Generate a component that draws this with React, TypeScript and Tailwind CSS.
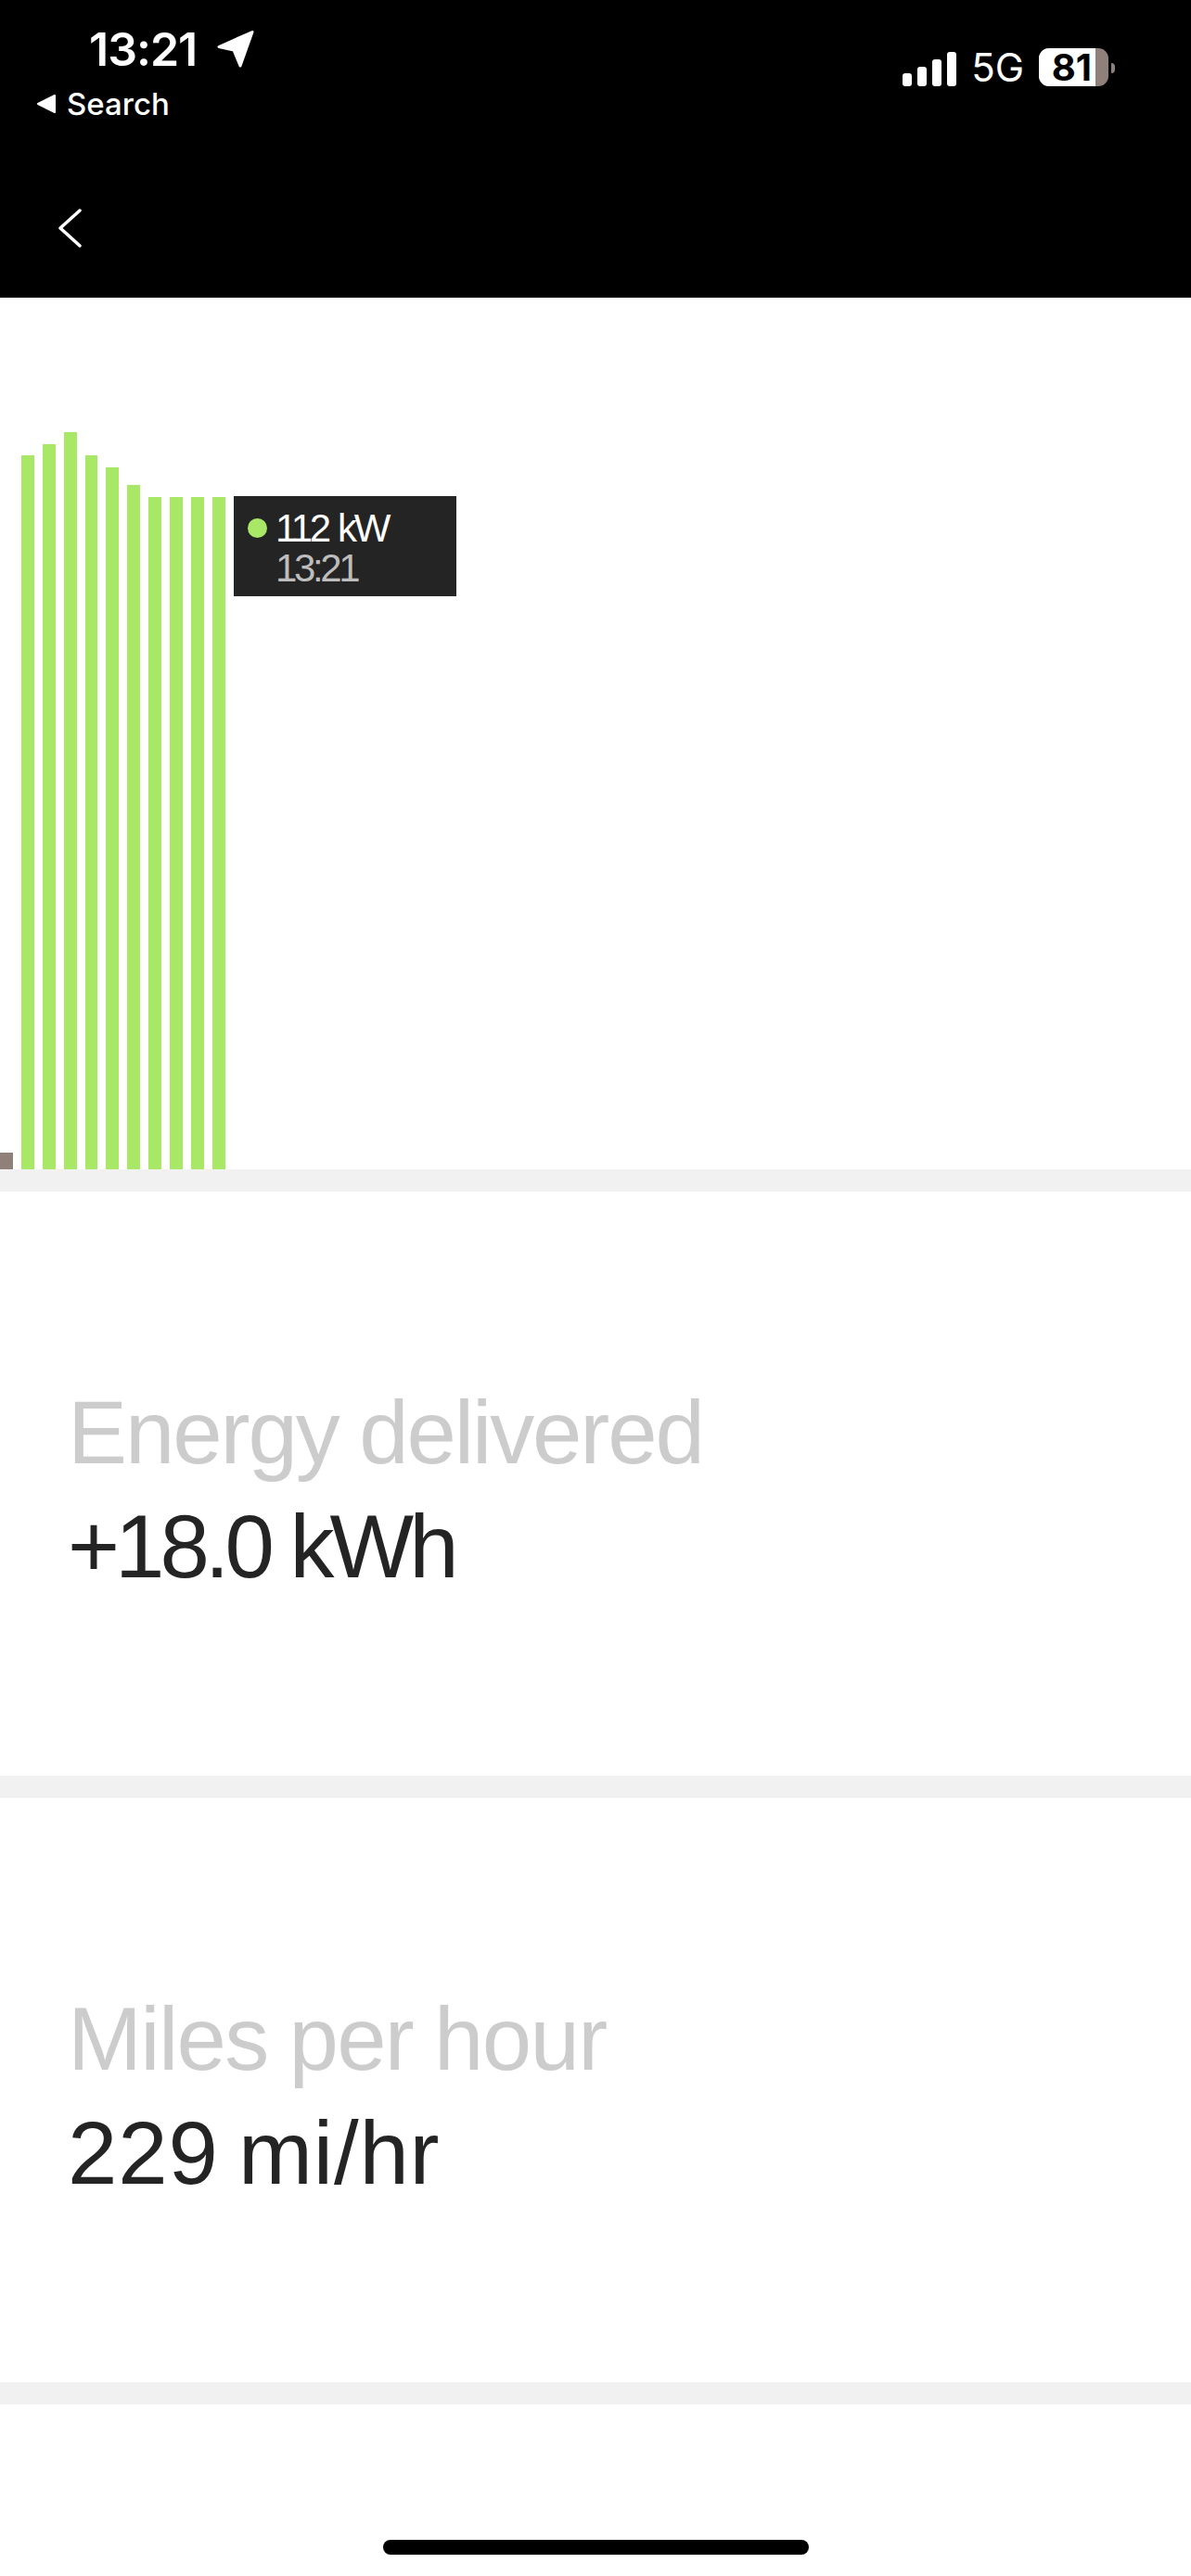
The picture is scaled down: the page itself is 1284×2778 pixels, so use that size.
const bars = [
  { height: 18, width: 'w-[14px]', color: 'bg-[#8f817a]' },
  { height: 770, width: 'w-[14px]', color: 'bg-[#a9e866]' },
  { height: 782, width: 'w-[14px]', color: 'bg-[#a9e866]' },
  { height: 795, width: 'w-[14px]', color: 'bg-[#a9e866]' },
  { height: 770, width: 'w-[13px]', color: 'bg-[#a9e866]' },
  { height: 757, width: 'w-[14px]', color: 'bg-[#a9e866]' },
  { height: 738, width: 'w-[14px]', color: 'bg-[#a9e866]' },
  { height: 725, width: 'w-[14px]', color: 'bg-[#a9e866]' },
  { height: 725, width: 'w-[14px]', color: 'bg-[#a9e866]' },
  { height: 725, width: 'w-[14px]', color: 'bg-[#a9e866]' },
  { height: 725, width: 'w-[14px]', color: 'bg-[#a9e866]' },
];

function StatusBar() {
  return (
    <div className="flex justify-between pl-[39px] pr-[82px] pt-[33px]">
      <div>
        <div className="flex items-center pl-[57px]">
          <span className="font-['Inter',sans-serif] text-[50px] leading-[40px] font-semibold tracking-[-1px]">13:21</span>
          <svg className="ml-[22px]" width="40" height="40" viewBox="0 0 40 40">
            <path d="M38 1.5 2 17.5 18 21 25 38Z" fill="white" stroke="white" strokeWidth="3" strokeLinejoin="round" />
          </svg>
        </div>
        <div className="mt-[24px] flex items-center">
          <svg width="22" height="22" viewBox="0 0 22 22">
            <path d="M20 2 2 11l18 9Z" fill="white" stroke="white" strokeWidth="2" strokeLinejoin="round" />
          </svg>
          <span className="ml-[11px] font-['Inter',sans-serif] text-[33px] leading-[30px] font-medium">Search</span>
        </div>
      </div>
      <div className="flex h-[60px] items-end pt-[19px]">
        <div className="flex items-end gap-[6px]">
          <span className="h-[14px] w-[10px] rounded-[3px] bg-white" />
          <span className="h-[21px] w-[10px] rounded-[3px] bg-white" />
          <span className="h-[29px] w-[10px] rounded-[3px] bg-white" />
          <span className="h-[37px] w-[10px] rounded-[3px] bg-white" />
        </div>
        <span className="ml-[16px] font-['Inter',sans-serif] text-[42px] leading-[40px] font-normal">5G</span>
        <div className="relative ml-[16px] flex h-[41px] w-[75px] items-center rounded-[11px] bg-[#8f817a]">
          <div className="flex h-full w-[61px] items-center justify-end rounded-l-[11px] bg-white pr-[4px] font-['Inter',sans-serif] text-[40px] leading-[40px] font-bold text-black">81</div>
        </div>
        <span className="mb-[14px] ml-[3px] h-[11px] w-[4px] rounded-r-full bg-[#8f817a]" />
      </div>
    </div>
  );
}

function Chart() {
  return (
    <div className="relative flex h-[940px] items-end gap-[9px] bg-white">
      {bars.map((bar, i) => (
        <div key={i} className={`${bar.width} ${bar.color}`} style={{ height: bar.height }} />
      ))}
      {/* tooltip for the last bar */}
      <div className="absolute top-[214px] left-[252px] h-[108px] w-[240px] bg-[#242424] pt-[13px] pl-[15px] font-['Liberation_Sans',sans-serif] text-[42px] leading-[43px] tracking-[-3.4px] [word-spacing:2px]">
        <div className="flex items-center">
          <span className="h-[21px] w-[21px] rounded-full bg-[#a9e866]" />
          <span className="ml-[9px] text-white">112 kW</span>
        </div>
        <div className="ml-[30px] text-[#bdbdbd]">13:21</div>
      </div>
    </div>
  );
}

function Stat({ label, value, labelClass, valueClass }: { label: string; value: string; labelClass: string; valueClass: string }) {
  return (
    <div className="flex h-[630px] flex-col justify-center bg-white pt-[11px] pl-[73px] font-['Liberation_Sans',sans-serif] text-[96px] leading-[123px]">
      <div className={`text-[#cccccc] ${labelClass}`}>{label}</div>
      <div className={`text-[#242424] ${valueClass}`}>{value}</div>
    </div>
  );
}

export default function App() {
  return (
    <div className="relative flex h-[2778px] flex-col overflow-hidden bg-white">
      <div className="h-[321px] bg-black text-white">
        <StatusBar />
        <svg className="mt-[96px] ml-[60px]" width="30" height="46" viewBox="0 0 30 46">
          <path d="M26 4 5 23l21 19" fill="none" stroke="white" strokeWidth="3.5" strokeLinecap="round" strokeLinejoin="round" />
        </svg>
      </div>
      <Chart />
      <div className="h-[24px] bg-[#f1f1f1]" />
      <Stat label="Energy delivered" value="+18.0 kWh" labelClass="tracking-[-2.1px] [word-spacing:-2px]" valueClass="tracking-[-5px]" />
      <div className="h-[24px] bg-[#f1f1f1]" />
      <Stat label="Miles per hour" value="229 mi/hr" labelClass="tracking-[-1.7px] [word-spacing:-2px]" valueClass="tracking-[0.8px] [word-spacing:-6px]" />
      <div className="h-[24px] bg-[#f1f1f1]" />
      <div className="absolute bottom-[23px] left-[413px] h-[16px] w-[459px] rounded-full bg-black" />
    </div>
  );
}
